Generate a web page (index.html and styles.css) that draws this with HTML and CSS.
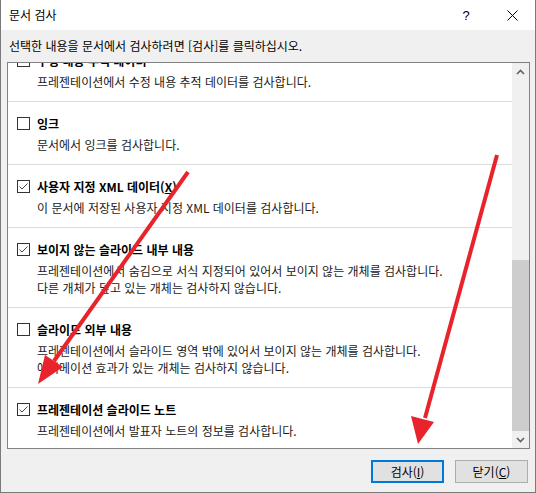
FILE: index.html
```html
<!DOCTYPE html>
<html lang="ko">
<head>
<meta charset="utf-8">
<title>문서 검사</title>
<link rel="stylesheet" href="styles.css">
</head>
<body>
<div class="window">
  <div class="titlebar">
    <span class="title">문서 검사</span>
    <span class="tb-btn help">?</span>
    <span class="tb-btn close">
      <svg width="11" height="11" viewBox="0 0 11 11"><path d="M0.5 0.5 L10.5 10.5 M10.5 0.5 L0.5 10.5" stroke="#000" stroke-width="1" fill="none"/></svg>
    </span>
  </div>
  <div class="intro">선택한 내용을 문서에서 검사하려면 [검사]를 클릭하십시오.</div>
  <div class="listbox">
    <div class="items">
      <div class="items-inner">
        <div class="item">
          <div class="label-row"><span class="cb checked"><svg width="11" height="11" viewBox="0 0 11 11"><path d="M1.5 5.5 L4 8 L9.5 2.5" stroke="#444" stroke-width="1" fill="none"/></svg></span><span class="label">수정 내용 추적 데이터</span></div>
          <div class="desc">프레젠테이션에서 수정 내용 추적 데이터를 검사합니다.</div>
        </div>
        <div class="item">
          <div class="label-row"><span class="cb"></span><span class="label">잉크</span></div>
          <div class="desc">문서에서 잉크를 검사합니다.</div>
        </div>
        <div class="item">
          <div class="label-row"><span class="cb checked"><svg width="11" height="11" viewBox="0 0 11 11"><path d="M1.5 5.5 L4 8 L9.5 2.5" stroke="#444" stroke-width="1" fill="none"/></svg></span><span class="label">사용자 지정 XML 데이터(<u>X</u>)</span></div>
          <div class="desc">이 문서에 저장된 사용자 지정 XML 데이터를 검사합니다.</div>
        </div>
        <div class="item">
          <div class="label-row"><span class="cb checked"><svg width="11" height="11" viewBox="0 0 11 11"><path d="M1.5 5.5 L4 8 L9.5 2.5" stroke="#444" stroke-width="1" fill="none"/></svg></span><span class="label">보이지 않는 슬라이드 내부 내용</span></div>
          <div class="desc">프레젠테이션에서 숨김으로 서식 지정되어 있어서 보이지 않는 개체를 검사합니다.<br>다른 개체가 덮고 있는 개체는 검사하지 않습니다.</div>
        </div>
        <div class="item">
          <div class="label-row"><span class="cb"></span><span class="label">슬라이드 외부 내용</span></div>
          <div class="desc">프레젠테이션에서 슬라이드 영역 밖에 있어서 보이지 않는 개체를 검사합니다.<br>애니메이션 효과가 있는 개체는 검사하지 않습니다.</div>
        </div>
        <div class="item last">
          <div class="label-row"><span class="cb checked"><svg width="11" height="11" viewBox="0 0 11 11"><path d="M1.5 5.5 L4 8 L9.5 2.5" stroke="#444" stroke-width="1" fill="none"/></svg></span><span class="label">프레젠테이션 슬라이드 노트</span></div>
          <div class="desc">프레젠테이션에서 발표자 노트의 정보를 검사합니다.</div>
        </div>
      </div>
    </div>
    <div class="scrollbar">
      <div class="sb-arrow"><svg width="9" height="6" viewBox="0 0 9 6"><path d="M1 5 L4.5 1.5 L8 5" stroke="#606060" stroke-width="1.6" fill="none"/></svg></div>
      <div class="sb-track"><div class="sb-thumb"></div></div>
      <div class="sb-arrow"><svg width="9" height="6" viewBox="0 0 9 6"><path d="M1 1 L4.5 4.5 L8 1" stroke="#606060" stroke-width="1.6" fill="none"/></svg></div>
    </div>
  </div>
  <div class="footer">
    <div class="btn default">검사(<u>I</u>)</div>
    <div class="btn">닫기(<u>C</u>)</div>
  </div>
</div>
<svg class="annot" width="536" height="493" viewBox="0 0 536 493">
  <line x1="188" y1="172" x2="54" y2="361" stroke="#e8232b" stroke-width="4"/>
  <polygon points="38,384 63,367 45,355" fill="#e8232b"/>
  <line x1="497" y1="155" x2="425" y2="418" stroke="#e8232b" stroke-width="4"/>
  <polygon points="418,444 411,416 434,422" fill="#e8232b"/>
</svg>
</body>
</html>
```

FILE: styles.css
```css
html, body {
  margin: 0;
  padding: 0;
  background: #ffffff;
}
body {
  position: relative;
  font-family: "Noto Sans CJK KR", "Noto Sans", sans-serif;
  font-size: 12px;
  color: #000;
}
.window {
  width: 536px;
  height: 493px;
  box-sizing: border-box;
  border: 1px solid #7a7a7a;
  border-top: none;
  background: #f0f0f0;
  display: flex;
  flex-direction: column;
}
.titlebar {
  height: 30px;
  background: #ffffff;
  display: flex;
  align-items: center;
  flex-shrink: 0;
}
.title {
  flex: 1;
  padding-left: 8px;
  line-height: 30px;
}
.tb-btn {
  width: 46px;
  height: 30px;
  display: flex;
  align-items: center;
  justify-content: center;
}
.help {
  font-family: "Liberation Sans", sans-serif;
  font-size: 13px;
}
.intro {
  height: 32px;
  line-height: 32px;
  padding-left: 8px;
  flex-shrink: 0;
}
.listbox {
  margin-left: 6px;
  width: 523px;
  height: 387px;
  box-sizing: border-box;
  border: 1px solid #828282;
  background: #ffffff;
  display: flex;
  overflow: hidden;
  flex-shrink: 0;
}
.items {
  flex: 1;
  overflow: hidden;
}
.items-inner {
  margin-top: -24px;
}
.item {
  padding: 13px 0 11px 9px;
  border-bottom: 1px solid #dcdcdc;
}
.item.last {
  border-bottom: none;
}
.label-row {
  display: flex;
  align-items: center;
  gap: 7px;
  height: 17px;
}
.cb {
  width: 13px;
  height: 13px;
  box-sizing: border-box;
  border: 1px solid #333333;
  background: #ffffff;
  display: flex;
  align-items: center;
  justify-content: center;
  flex-shrink: 0;
}
.label {
  font-weight: bold;
  line-height: 17px;
}
.desc {
  margin: 4px 0 0 20px;
  line-height: 17px;
  color: #1a1a1a;
}
.scrollbar {
  width: 17px;
  background: #f0f0f0;
  display: flex;
  flex-direction: column;
}
.sb-arrow {
  height: 17px;
  display: flex;
  align-items: center;
  justify-content: center;
  flex-shrink: 0;
}
.sb-track {
  flex: 1;
  display: flex;
  flex-direction: column;
  justify-content: flex-end;
}
.sb-thumb {
  height: 171px;
  background: #cdcdcd;
}
.footer {
  display: flex;
  justify-content: flex-end;
  gap: 11px;
  padding: 11px 7px 0 0;
}
.btn {
  width: 73px;
  height: 23px;
  box-sizing: border-box;
  border: 1px solid #adadad;
  background: #e1e1e1;
  display: flex;
  align-items: center;
  justify-content: center;
  font-size: 12px;
}
.btn.default {
  border: 2px solid #0078d7;
}
.annot {
  position: absolute;
  left: 0;
  top: 0;
  pointer-events: none;
}
```
